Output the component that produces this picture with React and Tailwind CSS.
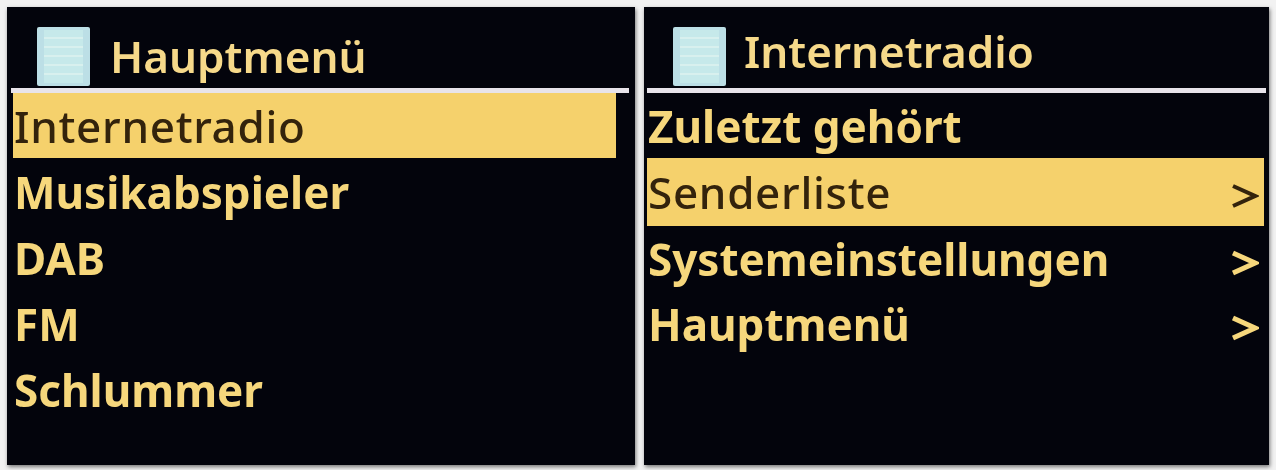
const left = [
  { label: 'Internetradio', active: true, row: 'h-[65px]' },
  { label: 'Musikabspieler', row: 'h-[66px] pt-[2px]' },
  { label: 'DAB', row: 'h-[66px] pt-[2px]' },
  { label: 'FM', row: 'h-[66px] pt-[2px]' },
  { label: 'Schlummer', row: 'h-[66px] pt-[2px]' },
];

const right = [
  { label: 'Zuletzt gehört', row: 'h-[65px]' },
  { label: 'Senderliste', active: true, more: true, row: 'h-[68px]' },
  { label: 'Systemeinstellungen', more: true, row: 'h-[65px]' },
  { label: 'Hauptmenü', more: true, row: 'h-[65px]' },
];

function MenuIcon({ className }) {
  return (
    <svg viewBox="0 0 53 59" className={className}>
      <rect width="53" height="59" rx="2" fill="#bcdfe6" />
      <rect x="7" y="3" width="39" height="53" fill="#c6e9ea" />
      {[10, 19, 28, 37, 46].map(y => <rect key={y} x="7" y={y} width="39" height="2" fill="#d8f0ee" />)}
    </svg>
  );
}

function Arrow({ active }) {
  return (
    <svg viewBox="0 0 28 26" className="w-[28px] h-[26px] mt-[8px] blur-[0.4px]" fill="none" stroke={active ? '#33230c' : '#f6d77c'} strokeWidth={active ? 4 : 5}>
      <path d="M2 3 L24 13 L2 23" />
    </svg>
  );
}

function Panel({ title, items, icon, titleClass, width, line, list }) {
  return (
    <div className={`${width} h-[458px] bg-[#03040c] shadow-[1px_2px_4px_#777] font-['Noto_Sans',sans-serif] flex flex-col`}>
      <div className={`h-[81px] flex shrink-0 ${icon}`}>
        <MenuIcon className="w-[53px] h-[59px] mt-[20px] shrink-0 blur-[0.5px]" />
        <span className={`text-[44px] leading-none font-semibold text-[#f6d98a] blur-[0.4px] ${titleClass}`}>{title}</span>
      </div>
      <div className={`h-[5px] bg-[#e8e4ea] shrink-0 ${line}`} />
      <div className={`flex flex-col ${list}`}>
        {items.map(item => (
          <div key={item.label} className={`${item.row} flex items-center justify-between pl-[1px] pr-[5px] text-[44px] leading-none ${item.active ? 'bg-[#f5d16c] text-[#33230c] font-medium tracking-[0.7px]' : 'text-[#f6d77c] font-bold'}`}>
            <span className="blur-[0.4px]">{item.label}</span>
            {item.more && <Arrow active={item.active} />}
          </div>
        ))}
      </div>
    </div>
  );
}

export default function App() {
  return (
    <div className="w-[1276px] h-[470px] bg-[#f2f2f2] pt-[7px] pl-[7px] flex gap-[9px]">
      <Panel title="Hauptmenü" items={left} icon="pl-[30px] gap-[20px]" titleClass="mt-[27px]" width="w-[628px]" line="ml-[4px] mr-[6px]" list="ml-[6px] mr-[19px]" />
      <Panel title="Internetradio" items={right} icon="pl-[29px] gap-[18px]" titleClass="mt-[22px]" width="w-[625px]" line="ml-[3px] mr-[3px]" list="ml-[3px] mr-[5px]" />
    </div>
  );
}
